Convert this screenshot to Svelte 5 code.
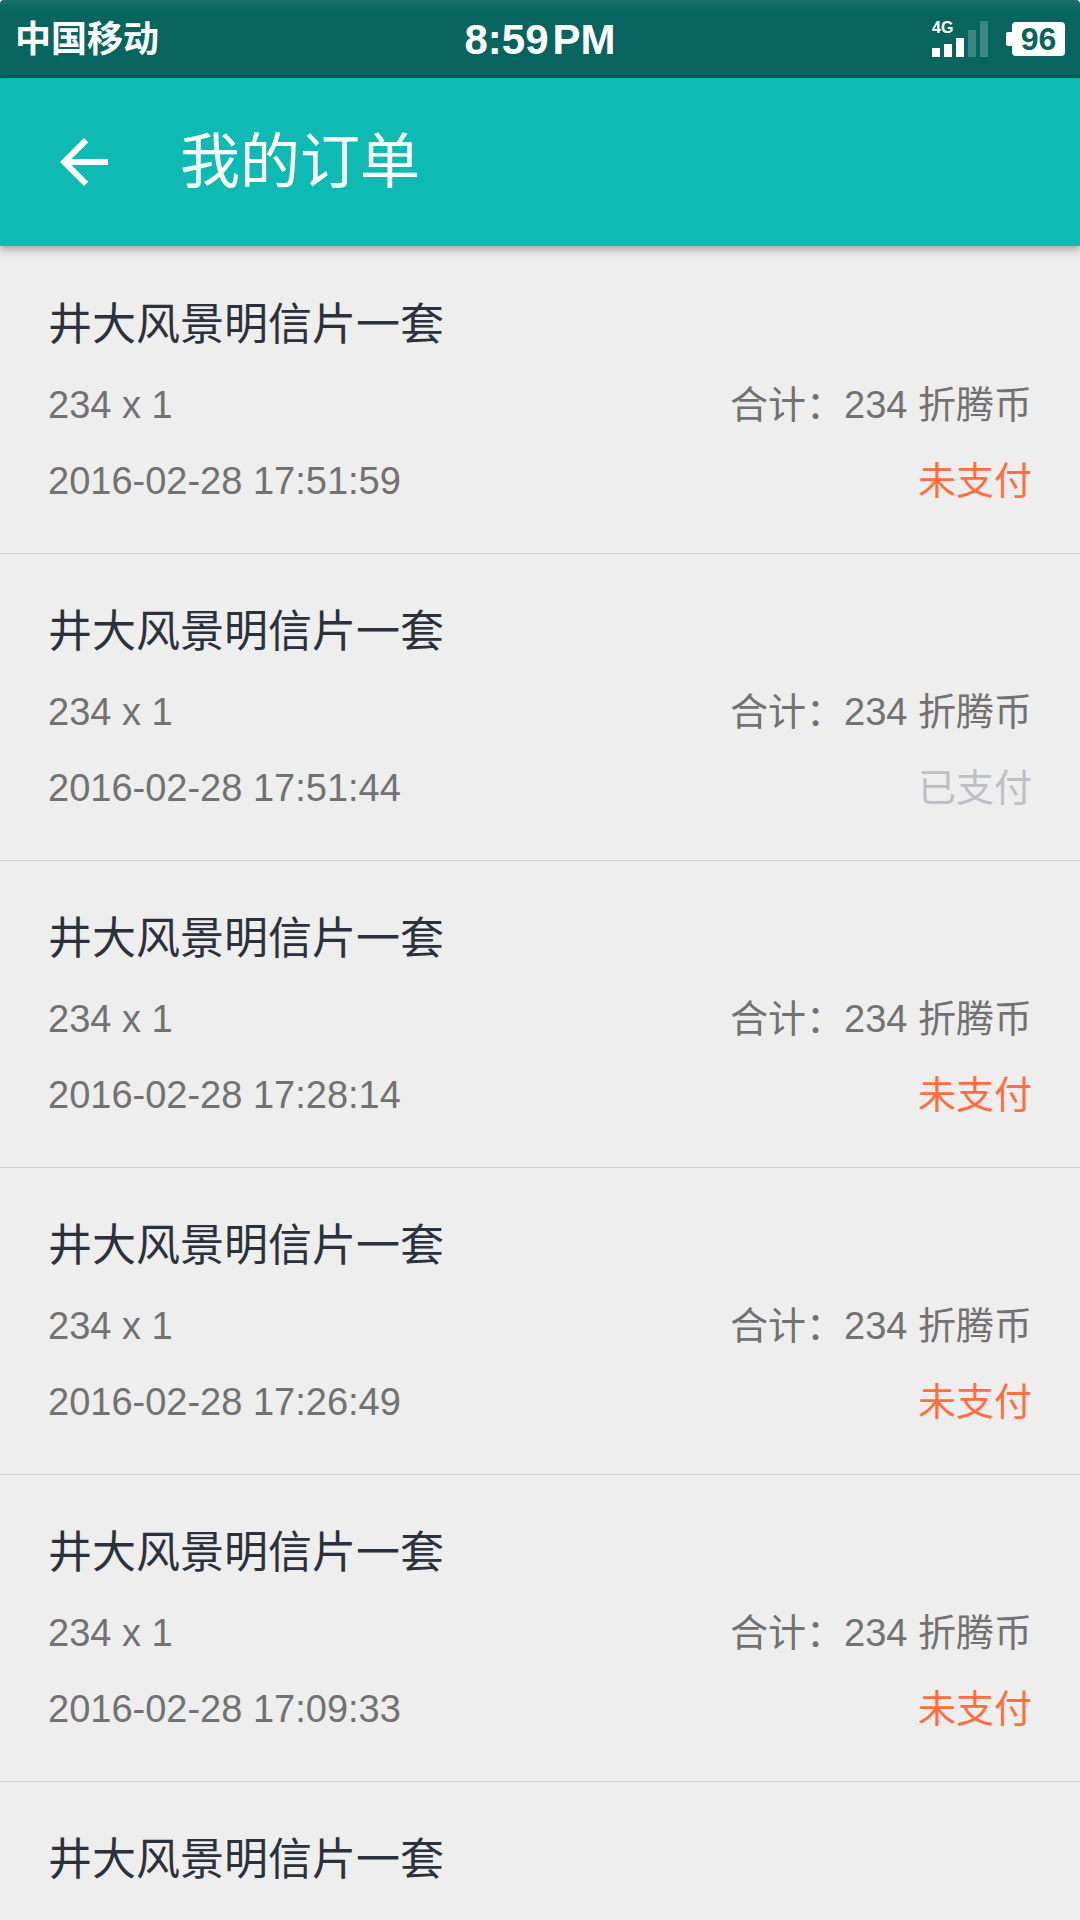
<script>
  const carrier = '中国移动';
  const battery = 96;

  const signalBars = [
    { x: 0, height: 9, on: true },
    { x: 12, height: 13, on: true },
    { x: 24, height: 19, on: true },
    { x: 36, height: 27, on: false },
    { x: 48, height: 36, on: false }
  ];

  let orders = $state([
    { name: '井大风景明信片一套', price: 234, count: 1, time: '2016-02-28 17:51:59', paid: false },
    { name: '井大风景明信片一套', price: 234, count: 1, time: '2016-02-28 17:51:44', paid: true },
    { name: '井大风景明信片一套', price: 234, count: 1, time: '2016-02-28 17:28:14', paid: false },
    { name: '井大风景明信片一套', price: 234, count: 1, time: '2016-02-28 17:26:49', paid: false },
    { name: '井大风景明信片一套', price: 234, count: 1, time: '2016-02-28 17:09:33', paid: false },
    { name: '井大风景明信片一套' }
  ]);

  function goBack() {
    history.back();
  }
</script>

<div class="screen">
  <div class="status-bar">
    <span class="carrier">{carrier}</span>
    <span class="clock"><span>8:59</span><span>PM</span></span>
    <div class="indicators">
      <svg class="signal" viewBox="0 0 56 36">
        <text x="0" y="12">4G</text>
        {#each signalBars as bar}
          <rect x={bar.x} y={36 - bar.height} width="8" height={bar.height} opacity={bar.on ? 1 : 0.22} />
        {/each}
      </svg>
      <div class="battery">
        <span class="nub"></span>
        <span class="level">{battery}</span>
      </div>
    </div>
  </div>

  <header class="toolbar">
    <button class="back" aria-label="返回" onclick={goBack}>
      <svg viewBox="0 0 24 24">
        <path d="M20 11H7.83l5.59-5.59L12 4l-8 8 8 8 1.41-1.41L7.83 13H20v-2z" />
      </svg>
    </button>
    <h1>我的订单</h1>
  </header>

  <ul class="orders">
    {#each orders as order}
      <li class="order">
        <h2>{order.name}</h2>
        {#if order.time}
          <div class="line">
            <span>{order.price} x {order.count}</span>
            <span>合计：{order.price * order.count} 折腾币</span>
          </div>
          <div class="line">
            <time>{order.time}</time>
            <span class="state" class:paid={order.paid}>{order.paid ? '已支付' : '未支付'}</span>
          </div>
        {/if}
      </li>
    {/each}
  </ul>
</div>

<style>
  :global(body) {
    background: #fff;
  }

  .screen {
    min-height: 100vh;
    background: #eee;
    border-radius: 4px;
    overflow: hidden;
    font-family: "Liberation Sans", "Noto Sans CJK SC", sans-serif;
  }

  .status-bar {
    display: grid;
    grid-template-columns: 1fr auto 1fr;
    align-items: center;
    height: 78px;
    padding: 0 15px;
    box-sizing: border-box;
    color: #fff;
    background: linear-gradient(#1a706b, #07645e 12px, #07645e 75px, #06544f);
  }
  .carrier {
    padding-top: 2px;
    font-size: 36px;
    font-weight: bold;
    line-height: 52px;
  }
  .clock {
    display: flex;
    gap: 4px;
    padding-top: 2px;
    font-size: 42px;
    font-weight: bold;
    line-height: 52px;
  }
  .indicators {
    display: flex;
    justify-content: flex-end;
    gap: 18px;
  }
  .signal {
    width: 56px;
    height: 36px;
    fill: #fff;
    overflow: visible;
  }
  .signal text {
    font-size: 16px;
    font-weight: bold;
  }
  .battery {
    display: flex;
    align-items: center;
  }
  .nub {
    width: 6px;
    height: 14px;
    border-radius: 2px 0 0 2px;
    background: #fff;
  }
  .level {
    width: 53px;
    border-radius: 4px;
    background: #fff;
    color: #07645e;
    font-size: 32px;
    font-weight: bold;
    line-height: 34px;
    text-align: center;
  }

  .toolbar {
    position: relative;
    display: flex;
    align-items: center;
    gap: 60px;
    height: 168px;
    padding: 0 48px;
    box-sizing: border-box;
    background: #10bab4;
    color: #fff;
    box-shadow: 0 4px 8px rgba(0, 0, 0, 0.3);
  }
  .back {
    width: 72px;
    height: 72px;
    padding: 0;
    border: none;
    background: none;
    cursor: pointer;
  }
  .back svg {
    display: block;
    fill: #fff;
  }
  h1 {
    margin: 0;
    padding-top: 2px;
    font-size: 60px;
    font-weight: 400;
    line-height: 88px;
  }

  .orders {
    margin: 0;
    padding: 0;
    list-style: none;
  }
  .order {
    padding: 46px 48px 34px;
    border-top: 1px solid #d0d0d0;
  }
  .order:first-child {
    border-top-color: transparent;
  }
  h2 {
    margin: 0 0 10px;
    color: #2c313b;
    font-size: 44px;
    font-weight: 400;
    line-height: 64px;
  }
  .line {
    display: flex;
    justify-content: space-between;
    color: #727272;
    font-size: 38px;
    line-height: 76px;
  }
  .state {
    color: #ff6e40;
  }
  .state.paid {
    color: #bcc0c6;
  }
</style>
